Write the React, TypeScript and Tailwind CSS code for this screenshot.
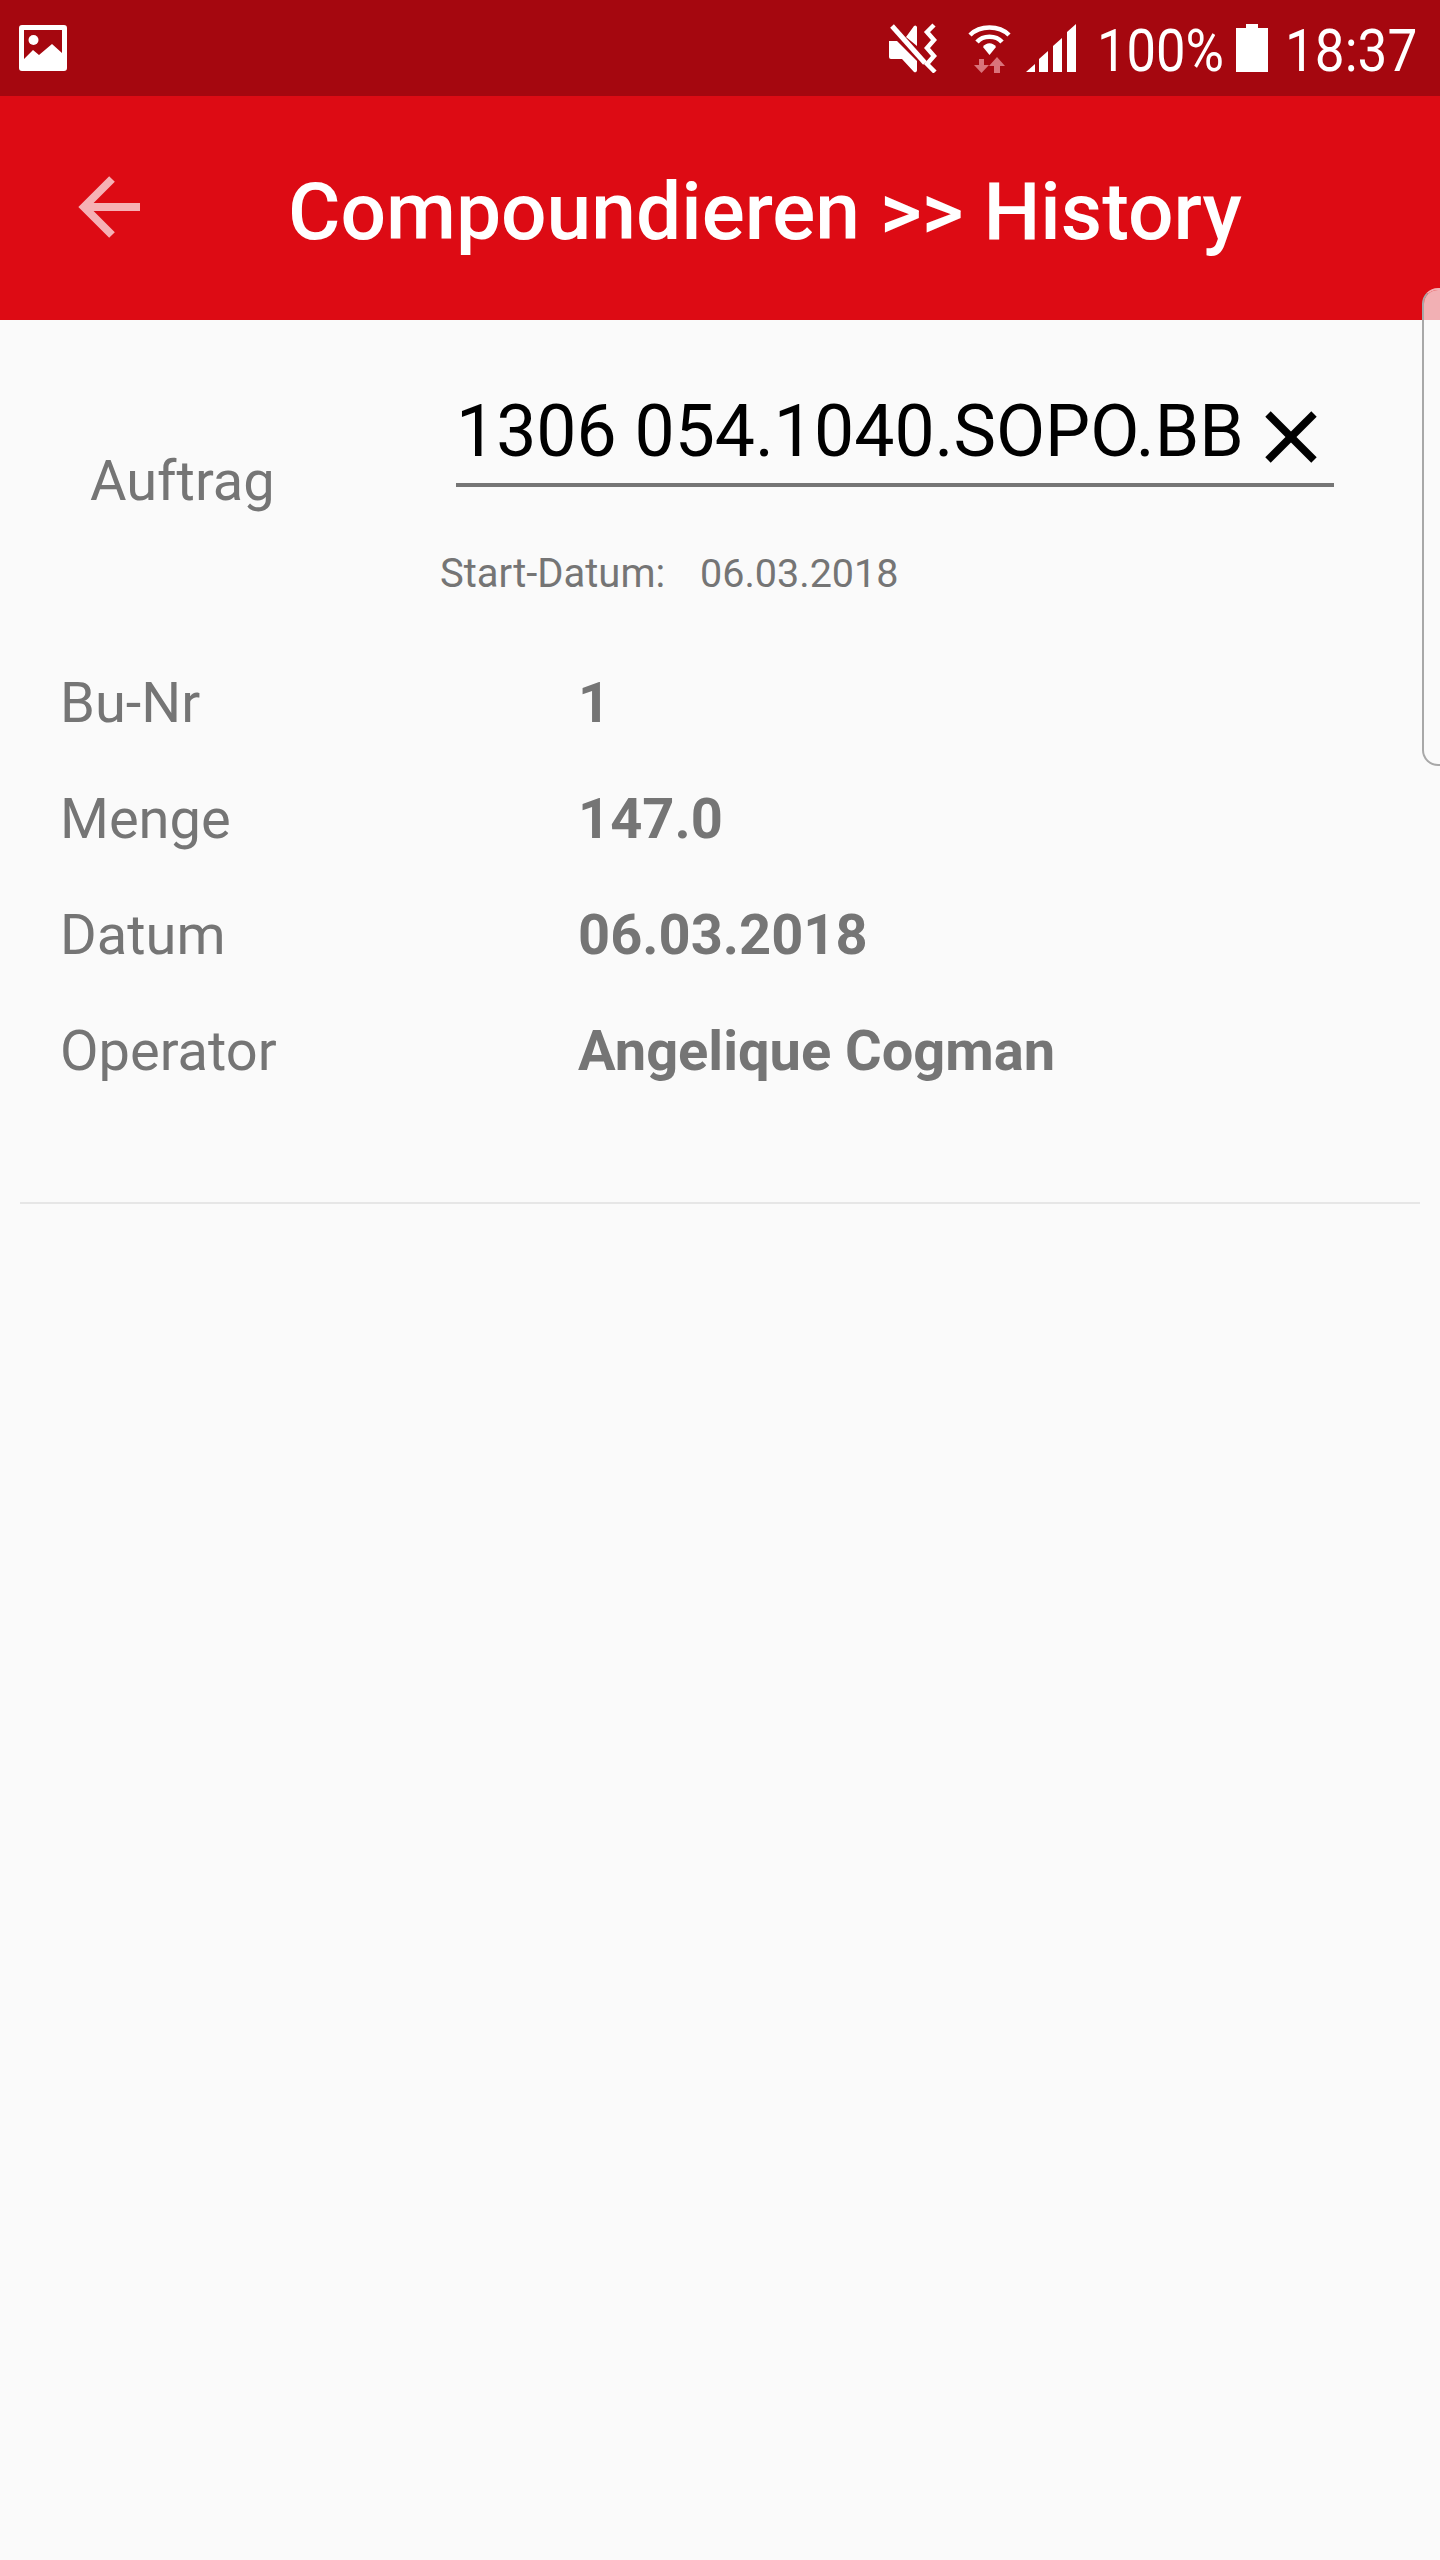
import { ArrowLeft, X } from "lucide-react"

const rows = [
  { label: "Bu-Nr", value: "1" },
  { label: "Menge", value: "147.0" },
  { label: "Datum", value: "06.03.2018" },
  { label: "Operator", value: "Angelique Cogman" },
]

// status bar icons
function PictureIcon() {
  return (
    <svg width="48" height="46" viewBox="0 0 48 46" className="block">
      <path fillRule="evenodd" fill="#fff" d="M3 0h42a3 3 0 0 1 3 3v40a3 3 0 0 1-3 3H3a3 3 0 0 1-3-3V3a3 3 0 0 1 3-3ZM5 5v29l9-9 6 5 13-11 10 9V5Z" />
      <circle cx="14.5" cy="15" r="5" fill="#fff" />
    </svg>
  )
}

function MuteIcon() {
  return (
    <svg width="48" height="50" viewBox="0 0 48 50" className="block">
      <path fill="#fff" d="M0 18h8L28 38v9a2 2 0 0 1-3 2L13 36H2a2 2 0 0 1-2-2ZM17 14 25 3a2 2 0 0 1 3 1v19Z" />
      <path stroke="#fff" strokeWidth="5" d="M3 3 36 40" />
      <path fill="none" stroke="#fff" strokeWidth="4.5" d="M45 2 38 9l7 8-7 8 7 8-7 8 8 8" />
    </svg>
  )
}

function WifiIcon() {
  return (
    <svg width="43" height="50" viewBox="0 0 43 50" className="block">
      <g fill="none" stroke="#fff" strokeWidth="4.5">
        <path d="M2 12C12 2 31 2 41 12" />
        <path d="M9 19C15 12 28 12 34 19" />
      </g>
      <path fill="#fff" d="M21.500 32 15 24C18 19 25 19 28 24Z" />
      <path fill="#d9737a" d="M11 36h5v6h5l-7.500 8L6 42h5ZM26 50v-7h-5l8-9 8 9h-5v7Z" />
    </svg>
  )
}

function SignalIcon() {
  return (
    <svg width="50" height="48" viewBox="0 0 50 48" className="block">
      <path fill="#fff" d="M0 48 9 40V48ZM13 48V35L22 27V48ZM27 48V22L36 14V48ZM41 48V8L50 0V48Z" />
    </svg>
  )
}

function BatteryIcon() {
  return (
    <svg width="32" height="48" viewBox="0 0 32 48" className="block">
      <path fill="#fff" d="M10 0h12v4h10v44H0V4h10Z" />
    </svg>
  )
}

export default function App() {
  return (
    <div className="relative w-[1440px] h-[2560px] overflow-hidden bg-[#fafafa] font-['Roboto',sans-serif]">

      <div className="h-[96px] bg-[#a5070f] flex items-center justify-between pl-[19px] pr-[23px]">
        <PictureIcon />
        <div className="flex items-center text-white">
          <MuteIcon />
          <div className="ml-[31px]"><WifiIcon /></div>
          <div className="ml-[15px]"><SignalIcon /></div>
          <span className="w-[126px] ml-[21px] mt-[6px] text-[60px] leading-none whitespace-nowrap scale-x-[0.875] origin-left">100%</span>
          <div className="ml-[13px]"><BatteryIcon /></div>
          <span className="w-[132px] ml-[17px] mt-[6px] text-[60px] leading-none whitespace-nowrap scale-x-[0.885] origin-left">18:37</span>
        </div>
      </div>

      <div className="h-[224px] bg-[#dd0b14] flex items-center">
        <ArrowLeft size={96} strokeWidth={2} strokeLinecap="butt" strokeLinejoin="miter" className="ml-[64px] mt-[-2px] text-[#f6b1b5]" />
        <h1 className="ml-[128px] mt-[9px] text-[80.3px] leading-none font-medium text-white whitespace-nowrap">Compoundieren &gt;&gt; History</h1>
      </div>

      <div className="flex pl-[90px] pt-[70px]">
        <span className="w-[366px] mt-[63px] text-[56px] leading-none text-[#757575]">Auftrag</span>
        <div className="w-[878px] h-[97px] flex border-b-[4px] border-[#757575]">
          <span className="text-[71.5px] leading-[83px] text-black whitespace-nowrap">1306 054.1040.SOPO.BB</span>
          <X size={92} strokeWidth={2} strokeLinecap="butt" className="ml-[1px] mt-[1px] shrink-0 text-black" />
        </div>
      </div>

      <div className="flex pl-[440px] mt-[45px] text-[#757575] leading-[40px]">
        <span className="w-[260px] text-[40px]">Start-Datum:</span>
        <span className="text-[39.5px]">06.03.2018</span>
      </div>

      <div className="mt-[51px] pl-[60px]">
        {rows.map((row) => (
          <div key={row.label} className="flex h-[116px] items-center text-[56px] text-[#757575]">
            <span className="w-[518px]">{row.label}</span>
            <span className="font-bold">{row.value}</span>
          </div>
        ))}
      </div>

      <div className="mx-[20px] mt-[93px] border-t-2 border-[#e6e6e6]" />

      {/* edge panel handle */}
      <div className="absolute right-[-24px] top-[288px] w-[42px] h-[478px] rounded-[16px] border-2 border-[#a8a8a8] [border-top-color:#f2b0b4]">
        <div className="h-[30px] rounded-t-[14px] bg-[#f2b0b4]" />
      </div>
    </div>
  )
}
